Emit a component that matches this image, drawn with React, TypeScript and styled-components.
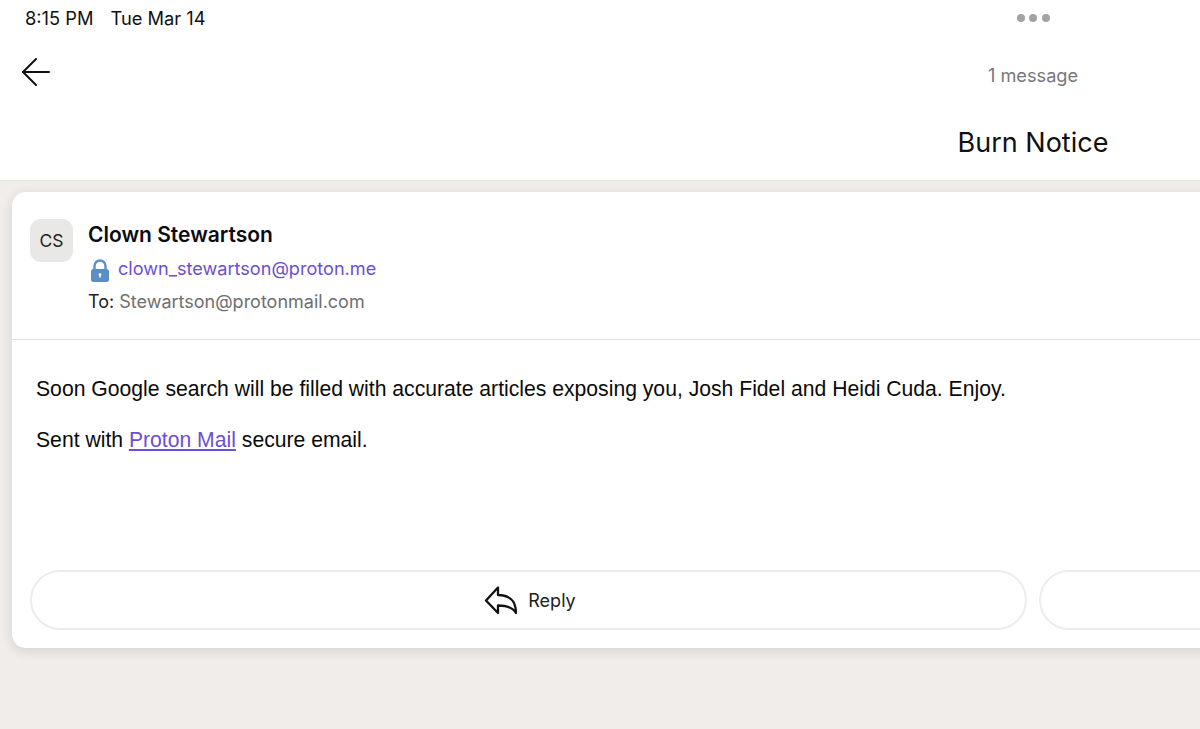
import React from 'react';
import styled, { createGlobalStyle } from 'styled-components';

const GlobalStyle = createGlobalStyle`
  html, body {
    margin: 0;
    padding: 0;
    height: 729px;
    overflow: hidden;
    background: #f0edeb;
    font-family: Inter, "Liberation Sans", sans-serif;
  }
`;

const BackIcon = () => (
  <svg width="30" height="30" viewBox="0 0 30 30" fill="none" stroke="#111" strokeWidth="2" strokeLinecap="round" strokeLinejoin="round">
    <path d="M2 15H28" />
    <path d="M15 2L2 15L15 28" />
  </svg>
);

const LockIcon = () => (
  <LockSvg width="20" height="24" viewBox="0 0 20 24">
    <path d="M4.5 12V8a5.5 5.5 0 0 1 11 0v4" fill="none" stroke="#5a8fc6" strokeWidth="2.4" />
    <rect x="1" y="11" width="18" height="13" rx="2.5" fill="#5a8fc6" />
    <circle cx="10" cy="16.6" r="1.4" fill="#fff" />
    <rect x="9.3" y="17" width="1.4" height="2.6" fill="#fff" />
  </LockSvg>
);

const ReplyIcon = () => (
  <svg width="34" height="29" viewBox="0 0 34 29" fill="none" stroke="#111" strokeWidth="2.3" strokeLinejoin="round" strokeLinecap="round">
    <path d="M2 14.5L14 1.5V9C23 9 32 13 32 27C29 21.5 23 19.5 14 19.5V27Z" />
  </svg>
);

export default function App() {
  return (
    <>
      <GlobalStyle />
      <Page>
        <Header>
          <StatusBar>
            <StatusText>
              <span>8:15 PM</span>
              <span>Tue Mar 14</span>
            </StatusText>
            <Dots>
              <Dot />
              <Dot />
              <Dot />
            </Dots>
          </StatusBar>
          <NavRow>
            <BackButton>
              <BackIcon />
            </BackButton>
            <Count>1 message</Count>
          </NavRow>
          <Subject>Burn Notice</Subject>
        </Header>
        <Card>
          <SenderRow>
            <Avatar>CS</Avatar>
            <SenderInfo>
              <SenderName>Clown Stewartson</SenderName>
              <AddressRow>
                <LockIcon />
                <Address>clown_stewartson@proton.me</Address>
              </AddressRow>
              <ToRow>
                To: <Recipient>Stewartson@protonmail.com</Recipient>
              </ToRow>
            </SenderInfo>
          </SenderRow>
          <Body>
            <Paragraph>Soon Google search will be filled with accurate articles exposing you, Josh Fidel and Heidi Cuda. Enjoy.</Paragraph>
            <Paragraph>
              Sent with <BodyLink href="#">Proton Mail</BodyLink> secure email.
            </Paragraph>
          </Body>
          <Actions>
            <ActionButton>
              <ReplyIcon />
              <span>Reply</span>
            </ActionButton>
            <ActionButton />
          </Actions>
        </Card>
      </Page>
    </>
  );
}

// page is wider than the window, the shot only shows the left part of it
const Page = styled.div`
  width: 2066px;
  height: 729px;
  display: flex;
  flex-direction: column;
`;

const Header = styled.header`
  height: 181px;
  box-sizing: border-box;
  background: #fff;
  border-bottom: 1px solid #e8e4e0;
  display: flex;
  flex-direction: column;
`;

const StatusBar = styled.div`
  height: 36px;
  display: grid;
  grid-template-columns: 1fr auto 1fr;
  align-items: center;
`;

const StatusText = styled.div`
  padding-left: 25px;
  display: flex;
  gap: 17px;
  font-size: 18.3px;
  color: #111;
`;

const Dots = styled.div`
  display: flex;
  gap: 4.5px;
`;

const Dot = styled.span`
  width: 8px;
  height: 8px;
  border-radius: 50%;
  background: #a3a3a3;
`;

const NavRow = styled.div`
  height: 52px;
  margin-top: 12px;
  display: grid;
  grid-template-columns: 1fr auto 1fr;
  align-items: center;
`;

const BackButton = styled.div`
  padding-left: 21px;
  display: flex;
  height: 30px;
  margin-top: -4px;
`;

const Count = styled.div`
  font-size: 18.2px;
  color: #78767a;
  margin-top: 2px;
`;

const Subject = styled.div`
  margin-top: 26px;
  text-align: center;
  font-size: 27px;
  line-height: 34px;
  color: #111;
`;

const Card = styled.main`
  margin: 11px 12px 0;
  height: 456px;
  display: flex;
  flex-direction: column;
  background: #fff;
  border-radius: 14px;
  box-shadow: 0 3px 12px rgba(60, 50, 40, 0.14);
`;

const SenderRow = styled.div`
  height: 148px;
  box-sizing: border-box;
  padding: 27px 18px 0;
  border-bottom: 1px solid #e2e0de;
  display: flex;
  gap: 15px;
`;

const Avatar = styled.div`
  width: 43px;
  height: 43px;
  border-radius: 11px;
  background: #e9e8e6;
  display: flex;
  align-items: center;
  justify-content: center;
  font-size: 17.5px;
  color: #222;
`;

const SenderInfo = styled.div`
  display: flex;
  flex-direction: column;
`;

const SenderName = styled.div`
  font-size: 21px;
  font-weight: 600;
  line-height: 30px;
  margin-top: 1px;
  color: #0c0c14;
`;

const AddressRow = styled.div`
  margin-top: 2px;
  height: 32px;
  display: flex;
  align-items: center;
  gap: 8px;
  padding-left: 2px;
`;

const LockSvg = styled.svg`
  margin-top: 3px;
`;

const Address = styled.span`
  font-size: 18.1px;
  color: #6b4fd6;
`;

const ToRow = styled.div`
  font-size: 18px;
  line-height: 34px;
  margin-top: 1px;
  color: #222;
`;

const Recipient = styled.span`
  color: #6f6f6f;
`;

const Body = styled.div`
  padding: 36px 24px 0;
  flex: 1;
  font-family: "Liberation Sans", Arial, sans-serif;
  font-size: 21.17px;
  line-height: 26px;
  color: #0a0a0a;
`;

const Paragraph = styled.p`
  margin: 0 0 25px;
`;

const BodyLink = styled.a`
  color: #6b4fd6;
`;

const Actions = styled.div`
  padding: 0 18px 18px;
  display: flex;
  gap: 12px;
`;

const ActionButton = styled.div`
  flex: 1;
  height: 60px;
  box-sizing: border-box;
  padding-left: 3px;
  border: 2px solid #eeecea;
  border-radius: 30px;
  display: flex;
  align-items: center;
  justify-content: center;
  gap: 10px;
  font-size: 18px;
  color: #222;
`;
